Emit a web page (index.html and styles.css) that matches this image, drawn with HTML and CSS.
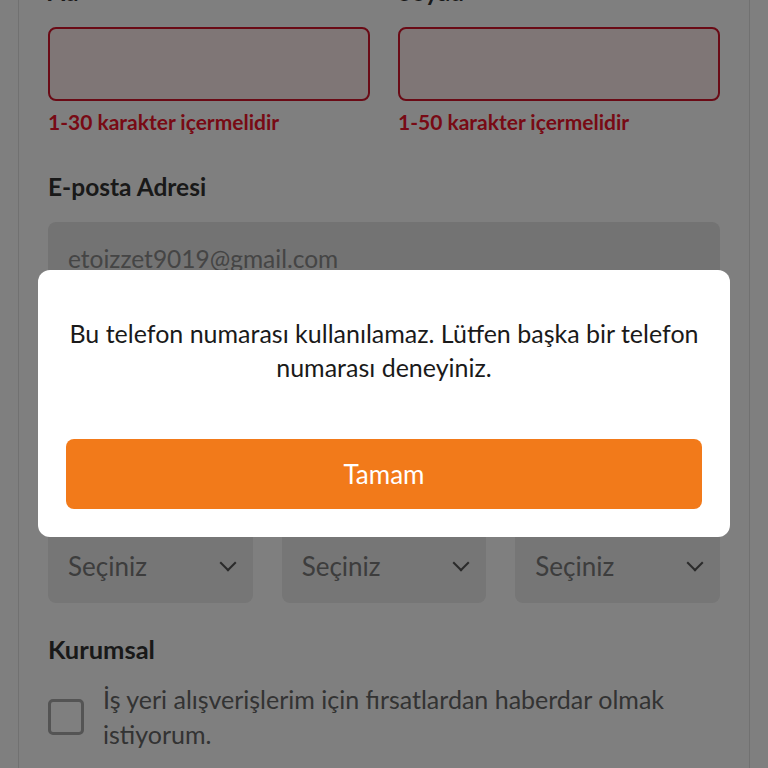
FILE: index.html
```html
<!DOCTYPE html>
<html lang="tr">
  <head>
    <meta charset="UTF-8" />
    <meta name="viewport" content="width=device-width, initial-scale=1.0" />
    <title>Üyelik Bilgilerim</title>
    <link rel="stylesheet" href="styles.css">
  </head>
  <body>
    <div class="card">
      <div class="row">
        <div class="field">
          <label class="label">Ad</label>
          <div class="input error"></div>
          <div class="error-text">1-30 karakter içermelidir</div>
        </div>
        <div class="field">
          <label class="label">Soyad</label>
          <div class="input error"></div>
          <div class="error-text">1-50 karakter içermelidir</div>
        </div>
      </div>

      <div class="field">
        <label class="label">E-posta Adresi</label>
        <div class="input disabled">etoizzet9019@gmail.com</div>
      </div>

      <div class="field">
        <label class="label">Cep Telefonu</label>
        <div class="input"></div>
      </div>

      <div class="field field-date">
        <label class="label">Doğum Tarihi</label>
        <div class="selects">
          <div class="select">Seçiniz <span class="chevron"></span></div>
          <div class="select">Seçiniz <span class="chevron"></span></div>
          <div class="select">Seçiniz <span class="chevron"></span></div>
        </div>
      </div>

      <div class="field field-corp">
        <label class="label">Kurumsal</label>
        <div class="check">
          <span class="box"></span>
          <span class="check-text">İş yeri alışverişlerim için fırsatlardan haberdar olmak istiyorum.</span>
        </div>
      </div>
    </div>

    <div class="overlay">
      <div class="modal">
        <p class="modal-text">Bu telefon numarası kullanılamaz. Lütfen başka bir telefon numarası deneyiniz.</p>
        <button class="modal-btn">Tamam</button>
      </div>
    </div>
  </body>
</html>
```

FILE: styles.css
```css
body {
  margin: 0;
  background: #fff;
  font-family: Lato, "Noto Sans", sans-serif;
  color: #333;
}

.card {
  margin: -23px 18px 0;
  padding: 0 29px 40px;
  border: 1px solid #e2e2e2;
  border-top: none;
  height: 900px;
}

.row {
  display: flex;
  gap: 28px;
}

.row .field {
  flex: 1;
}

.field {
  margin-bottom: 36px;
}

.label {
  display: block;
  font-size: 24.5px;
  font-weight: 700;
  line-height: 30px;
  margin-bottom: 20px;
  color: #333;
}

.input {
  height: 74px;
  box-sizing: border-box;
  border-radius: 8px;
  background: #f3f3f3;
  padding: 0 20px;
  font-size: 24.5px;
  line-height: 74px;
  color: #8a8a8a;
}

.input.error {
  background: #ffeded;
  border: 2px solid #d4142a;
}

.input.disabled {
  background: #e6e6e6;
}

.error-text {
  margin-top: 7px;
  font-size: 21px;
  font-weight: 700;
  line-height: 28px;
  color: #f0142a;
}

.field-date {
  margin-top: -13px;
  margin-bottom: 31px;
}

.selects {
  display: flex;
  gap: 29px;
}

.select {
  flex: 1;
  height: 74px;
  box-sizing: border-box;
  border-radius: 8px;
  background: #ececec;
  padding: 0 19px 0 20px;
  font-size: 26px;
  color: #7a7a7a;
  display: flex;
  align-items: center;
  justify-content: space-between;
}

.chevron {
  width: 10px;
  height: 10px;
  border-right: 2px solid #555;
  border-bottom: 2px solid #555;
  transform: rotate(45deg);
  margin-top: -6px;
}

.field-corp .label {
  font-size: 25.5px;
  margin-bottom: 18px;
}

.check {
  display: flex;
  align-items: center;
  gap: 19px;
}

.box {
  flex: none;
  width: 36px;
  height: 36px;
  box-sizing: border-box;
  border: 3px solid #a8a8a8;
  border-radius: 5px;
}

.check-text {
  font-size: 25px;
  line-height: 35px;
  color: #666;
}

.overlay {
  position: fixed;
  inset: 0;
  background: rgba(0, 0, 0, 0.5);
}

.modal {
  position: absolute;
  top: 270px;
  left: 38px;
  width: 692px;
  box-sizing: border-box;
  background: #fff;
  border-radius: 12px;
  padding: 46px 28px 28px;
  text-align: center;
}

.modal-text {
  margin: 0 0 55px;
  font-size: 25px;
  line-height: 34px;
  color: #1a1a1a;
}

.modal-btn {
  display: block;
  width: 100%;
  height: 70px;
  border: none;
  border-radius: 8px;
  background: #f27a1a;
  color: #fff;
  font-family: inherit;
  font-size: 26px;
}
```
